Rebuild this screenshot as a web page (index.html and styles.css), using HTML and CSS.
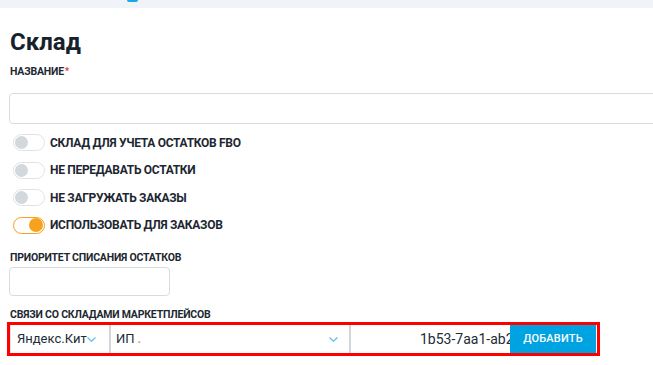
FILE: index.html
```html
<!DOCTYPE html>
<html>
<head>
  <meta charset="utf-8">
  <title>Склад</title>
  <link rel="stylesheet" href="styles.css">
</head>
<body>
<div class="topbar"><span class="topbar-dot"></span></div>

<div class="page">
  <h1 class="title">Склад</h1>

  <div class="label">Название<span class="req">*</span></div>
  <div class="input input-wide"></div>

  <div class="toggles">
    <div class="toggle-row">
      <span class="toggle"><span class="knob"></span></span>
      <span class="toggle-text">Склад для учета остатков FBO</span>
    </div>
    <div class="toggle-row">
      <span class="toggle"><span class="knob"></span></span>
      <span class="toggle-text">Не передавать остатки</span>
    </div>
    <div class="toggle-row">
      <span class="toggle"><span class="knob"></span></span>
      <span class="toggle-text">Не загружать заказы</span>
    </div>
    <div class="toggle-row">
      <span class="toggle on"><span class="knob"></span></span>
      <span class="toggle-text">Использовать для заказов</span>
    </div>
  </div>

  <div class="label label-prio">Приоритет списания остатков</div>
  <div class="input input-small"></div>

  <div class="label label-links">Связи со складами маркетплейсов</div>
  <div class="links">
    <div class="select select-mp">
      <span>Яндекс.Кит</span>
      <svg class="chevron" width="9" height="5" viewBox="0 0 9 5"><path d="M0.5 0.5 L4.5 4.2 L8.5 0.5" fill="none" stroke="#5bbfea" stroke-width="1.2"/></svg>
    </div>
    <div class="select select-org">
      <span>ИП <span class="dot">.</span></span>
      <svg class="chevron" width="9" height="5" viewBox="0 0 9 5"><path d="M0.5 0.5 L4.5 4.2 L8.5 0.5" fill="none" stroke="#5bbfea" stroke-width="1.2"/></svg>
    </div>
    <div class="uuid"><span>1b53-7aa1-ab2c</span></div>
    <button class="add-btn">Добавить</button>
  </div>
</div>
</body>
</html>
```

FILE: styles.css
```css
html {
    overflow: hidden;
}
body {
    margin: 0;
    background: #fff;
    font-family: Roboto, "Liberation Sans", sans-serif;
    color: #1d2731;
}
.topbar {
    height: 8px;
    background: #f0f4f8;
    display: flex;
}
.topbar-dot {
    width: 11px;
    height: 2px;
    margin-left: 127px;
    background: #19a8e6;
    border-radius: 0 0 6px 6px;
}
.page {
    padding: 0 10px;
}
.title {
    margin: 20px 0 0;
    font-size: 24px;
    line-height: 28px;
    font-weight: 700;
    color: #17212b;
}
.label {
    margin-top: 9px;
    font-size: 10.5px;
    line-height: 13px;
    font-weight: 700;
    letter-spacing: -0.2px;
    text-transform: uppercase;
    color: #1d2731;
}
.req {
    color: #e32b2b;
    font-size: 9px;
    vertical-align: top;
    margin-left: 1px;
}
.input {
    box-sizing: border-box;
    border: 1px solid #d9dcdf;
    border-radius: 4px;
    background: #fff;
}
.input-wide {
    width: 700px;
    height: 31px;
    margin-top: 15px;
    margin-left: -1px;
}
.input-small {
    width: 161px;
    height: 29px;
    margin-top: 3px;
    margin-left: -1px;
}
.toggles {
    margin-top: 10px;
    display: flex;
    flex-direction: column;
    gap: 10.5px;
}
.toggle-row {
    display: flex;
    align-items: center;
}
.toggle {
    box-sizing: border-box;
    width: 32px;
    height: 17px;
    margin-left: 3px;
    border: 1px solid #dfe3e6;
    border-radius: 9px;
    display: flex;
    align-items: center;
    padding: 0 1px;
}
.knob {
    width: 13px;
    height: 13px;
    border-radius: 50%;
    background: #d3d8dc;
}
.toggle.on {
    border-color: #f6a21d;
    justify-content: flex-end;
}
.toggle.on .knob {
    background: #f6a21d;
    width: 14px;
    height: 14px;
}
.toggle-text {
    margin-left: 5px;
    font-size: 12px;
    line-height: 14px;
    font-weight: 700;
    letter-spacing: -0.3px;
    text-transform: uppercase;
    color: #1d2731;
}
.label-prio {
    margin-top: 17px;
}
.label-links {
    margin-top: 12px;
}
.links {
    display: flex;
    width: 587px;
    height: 28px;
    margin-top: 1px;
    margin-left: -3px;
    border: 3px solid #ff0000;
    font-size: 13px;
}
.select {
    box-sizing: border-box;
    display: flex;
    align-items: center;
    justify-content: space-between;
    padding: 0 11px 0 6px;
    border-right: 2.5px solid #d2d7dc;
    color: #222c35;
}
.select-mp {
    width: 101px;
    border-left: 1px solid #e3e6e9;
    padding-right: 13px;
}
.select-org {
    width: 240px;
    padding-left: 5px;
}
.dot {
    color: #d98a4a;
    font-size: 11px;
    font-weight: 700;
}
.chevron {
    margin-top: 1px;
}
.uuid {
    width: 159px;
    overflow: hidden;
    white-space: nowrap;
    display: flex;
    align-items: center;
    padding-left: 69px;
    box-sizing: border-box;
    font-size: 14px;
    color: #222c35;
}
.add-btn {
    width: 86px;
    border: 0;
    margin: 0;
    padding: 0;
    background: #00a3e2;
    color: #fff;
    font-family: Roboto, "Liberation Sans", sans-serif;
    font-size: 11px;
    font-weight: 500;
    text-transform: uppercase;
    letter-spacing: 0.2px;
}
```
